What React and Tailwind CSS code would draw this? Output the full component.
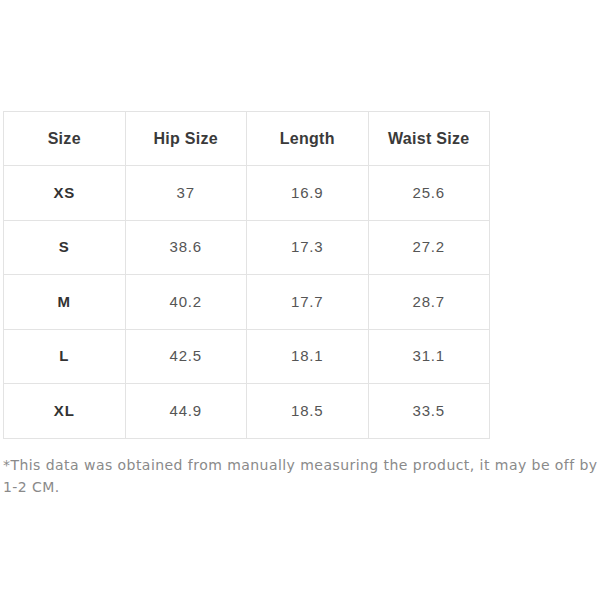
import React from 'react';

const headers = ['Size', 'Hip Size', 'Length', 'Waist Size'];

const rows = [
  ['XS', '37', '16.9', '25.6'],
  ['S', '38.6', '17.3', '27.2'],
  ['M', '40.2', '17.7', '28.7'],
  ['L', '42.5', '18.1', '31.1'],
  ['XL', '44.9', '18.5', '33.5'],
];

export default function App() {
  return (
    <div className="w-[600px] h-[600px] bg-white pt-[111px] pl-[3px] font-['Liberation_Sans',Arial,sans-serif]">
      <table className="w-[487px] border-collapse table-fixed">
        <thead>
          <tr className="h-[54px]">
            {headers.map((h) => (
              <th key={h} className="border border-[#e3e3e3] text-[16px] tracking-[0.3px] font-bold text-[#3a3a3a]">
                {h}
              </th>
            ))}
          </tr>
        </thead>
        <tbody>
          {rows.map((r) => (
            <tr key={r[0]} className="h-[54.5px]">
              {r.map((c, i) => (
                <td
                  key={i}
                  className={`border border-[#e3e3e3] text-center text-[15px] tracking-[0.8px] ${i === 0 ? 'font-bold text-[#333]' : 'text-[#555]'}`}
                >
                  {c}
                </td>
              ))}
            </tr>
          ))}
        </tbody>
      </table>
      <p className="mt-[15px] w-[597px] font-['DejaVu_Sans',sans-serif] text-[14px] tracking-[0.45px] leading-[22px] text-[#8a8a8a]">
        *This data was obtained from manually measuring the product, it may be off by 1-2 CM.
      </p>
    </div>
  );
}
